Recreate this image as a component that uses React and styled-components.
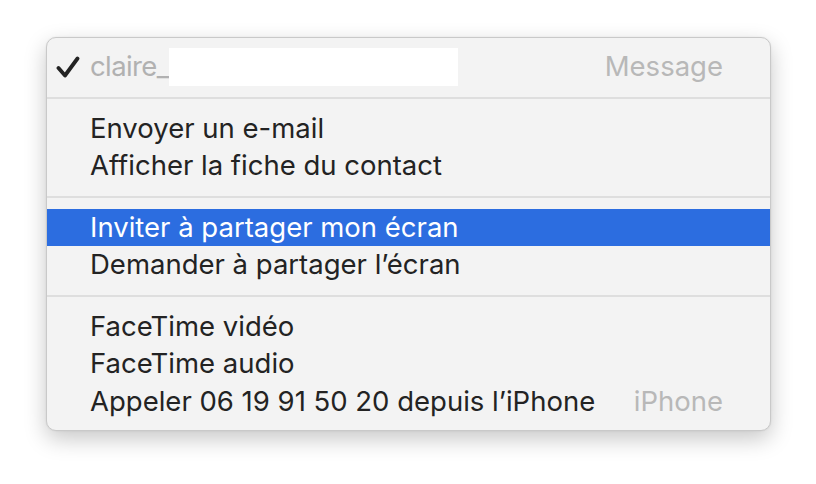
import styled, { createGlobalStyle } from "styled-components"

const GlobalStyle = createGlobalStyle`
  html, body {
    margin: 0;
    padding: 0;
    background: #ffffff;
  }
  body {
    font-family: "Inter", "Liberation Sans", sans-serif;
  }
`

const groups = [
    [{ label: "claire_", checked: true, disabled: true, hint: "Message", redacted: true }],
    [{ label: "Envoyer un e-mail" }, { label: "Afficher la fiche du contact" }],
    [{ label: "Inviter à partager mon écran", active: true }, { label: "Demander à partager l’écran" }],
    [
        { label: "FaceTime vidéo" },
        { label: "FaceTime audio" },
        { label: "Appeler 06 19 91 50 20 depuis l’iPhone", hint: "iPhone" },
    ],
]

const CheckIcon = () => (
    <svg width="24" height="22" viewBox="0 0 24 22">
        <path d="M2.5 12 L9 19.5 L21.5 2.5" fill="none" stroke="#232323" strokeWidth="3.8" strokeLinecap="round" strokeLinejoin="round" />
    </svg>
)

export default function App() {
    return <>
        <GlobalStyle />
        <Page>
            <Menu>
                {groups.map((group, gi) => (
                    <Group key={gi}>
                        {gi > 0 && <Separator />}
                        {group.map((item) => (
                            <Item key={item.label} active={item.active}>
                                <Mark>{item.checked && <CheckIcon />}</Mark>
                                <Label disabled={item.disabled}>
                                    {item.label}
                                    {item.redacted && <Redact />}
                                </Label>
                                {item.hint && <Hint>{item.hint}</Hint>}
                            </Item>
                        ))}
                    </Group>
                ))}
            </Menu>
        </Page>
    </>
}

const Page = styled.div`
width: 816px;
height: 484px;
padding: 37px 0 0 46px;
box-sizing: border-box;
`
const Menu = styled.div`
width: 725px;
box-sizing: border-box;
padding: 10px 0;
background: #f3f3f3;
border: 1px solid #c9c9c9;
border-radius: 10px;
box-shadow: 0px 8px 22px rgba(0, 0, 0, 0.22), 0 0 2px rgba(0, 0, 0, 0.08);
`
const Group = styled.div`
display: flex;
flex-direction: column;
`
const Separator = styled.div`
height: 2px;
margin: 11px 0;
background: #dedede;
`
const Item = styled.div`
display: flex;
align-items: center;
height: 37.5px;
padding: 0 47px 0 8px;
background: ${p => p.active ? "#2c6de0" : "transparent"};
color: ${p => p.active ? "#ffffff" : "#232323"};
font-size: 27.5px;
line-height: 1;
`
const Mark = styled.span`
width: 34px;
display: flex;
align-items: center;
padding-left: 1px;
`
const Label = styled.span`
flex: 1;
display: flex;
align-items: center;
white-space: nowrap;
color: ${p => p.disabled ? "#b1b1b1" : "inherit"};
letter-spacing: ${p => p.disabled ? "-0.6px" : "0"};
`
const Redact = styled.span`
display: inline-block;
width: 289px;
height: 38px;
background: #ffffff;
`
const Hint = styled.span`
color: #b8b8b8;
`
